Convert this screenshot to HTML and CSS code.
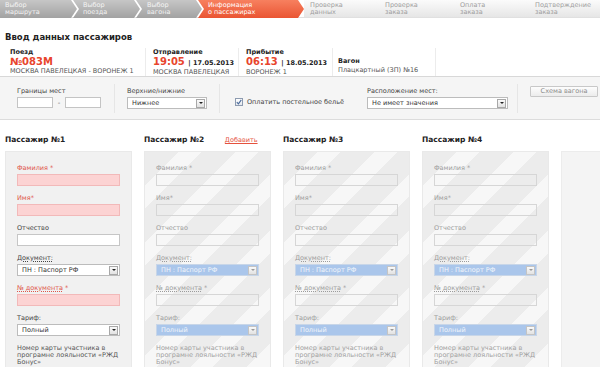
FILE: index.html
```html
<!DOCTYPE html>
<html lang="ru">
<head>
<meta charset="utf-8">
<title>Ввод данных пассажиров</title>
<link rel="stylesheet" href="styles.css">
</head>
<body>
<div class="steps">
  <div class="step done first">Выбор<br>маршрута</div>
  <div class="step done s2">Выбор<br>поезда</div>
  <div class="step done s3">Выбор<br>вагона</div>
  <div class="step active">Информация<br>о пассажирах</div>
  <div class="step todo">Проверка<br>данных</div>
  <div class="step todo">Проверка<br>заказа</div>
  <div class="step todo">Оплата<br>заказа</div>
  <div class="step todo">Подтверждение<br>заказа</div>
</div>

<h1 class="title">Ввод данных пассажиров</h1>

<div class="trip">
  <div class="tcol train">
    <div class="tlabel">Поезд</div>
    <div class="tbig">№083М</div>
    <div class="tsub">МОСКВА ПАВЕЛЕЦКАЯ - ВОРОНЕЖ 1</div>
  </div>
  <div class="tcol dep">
    <div class="tlabel">Отправление</div>
    <div class="tbig">19:05 <span class="tdate">| 17.05.2013</span></div>
    <div class="tsub">МОСКВА ПАВЕЛЕЦКАЯ</div>
  </div>
  <div class="tcol arr-col">
    <div class="tlabel">Прибытие</div>
    <div class="tbig">06:13 <span class="tdate">| 18.05.2013</span></div>
    <div class="tsub">ВОРОНЕЖ 1</div>
  </div>
  <div class="tcol car">
    <div class="tlabel">Вагон</div>
    <div class="tval">Плацкартный (ЗП) №16</div>
  </div>
</div>

<div class="filters">
  <div class="fsec f1">
    <div class="flabel">Границы мест</div>
    <div class="range"><span class="box small"></span><span class="dash">-</span><span class="box small"></span></div>
  </div>
  <div class="fsec f2">
    <div class="flabel">Верхние/нижние</div>
    <div class="sel fsel w80"><span>Нижнее</span><i class="arr"></i></div>
  </div>
  <div class="fsec f3">
    <div class="check"><span class="cb"><svg width="6" height="6" viewBox="0 0 6 6"><path d="M0.8 3.2 L2.4 4.8 L5.3 0.9" fill="none" stroke="#4a6a9a" stroke-width="1.1"/></svg></span>Оплатить постельное бельё</div>
  </div>
  <div class="fsec f4">
    <div class="flabel">Расположение мест:</div>
    <div class="sel fsel w141"><span>Не имеет значения</span><i class="arr"></i></div>
  </div>
  <div class="fsec f5">
    <div class="btn">Схема вагона</div>
  </div>
</div>

<div class="passengers">
  <div class="pcol">
    <div class="phead">Пассажир №1</div>
    <div class="panel">
      <div class="field req"><div class="lbl">Фамилия *</div><div class="inp"></div></div>
      <div class="field req"><div class="lbl">Имя*</div><div class="inp"></div></div>
      <div class="field"><div class="lbl">Отчество</div><div class="inp"></div></div>
      <div class="field"><div class="lbl"><u>Документ:</u></div><div class="sel"><span>ПН : Паспорт РФ</span><i class="arr"></i></div></div>
      <div class="field req"><div class="lbl"><u>№ документа</u> *</div><div class="inp"></div></div>
      <div class="field"><div class="lbl">Тариф:</div><div class="sel"><span>Полный</span><i class="arr"></i></div></div>
      <div class="note">Номер карты участника в програмне лояльности «РЖД Бонус»</div>
    </div>
  </div>

  <div class="pcol">
    <div class="phead">Пассажир №2 <a class="add">Добавить</a></div>
    <div class="panel off">
      <div class="field"><div class="lbl">Фамилия *</div><div class="inp"></div></div>
      <div class="field"><div class="lbl">Имя*</div><div class="inp"></div></div>
      <div class="field"><div class="lbl">Отчество</div><div class="inp"></div></div>
      <div class="field"><div class="lbl"><u>Документ:</u></div><div class="sel blue"><span>ПН : Паспорт РФ</span><i class="arr"></i></div></div>
      <div class="field"><div class="lbl"><u>№ документа</u> *</div><div class="inp"></div></div>
      <div class="field"><div class="lbl">Тариф:</div><div class="sel blue"><span>Полный</span><i class="arr"></i></div></div>
      <div class="note">Номер карты участника в програмне лояльности «РЖД Бонус»</div>
    </div>
  </div>

  <div class="pcol">
    <div class="phead">Пассажир №3</div>
    <div class="panel off">
      <div class="field"><div class="lbl">Фамилия *</div><div class="inp"></div></div>
      <div class="field"><div class="lbl">Имя*</div><div class="inp"></div></div>
      <div class="field"><div class="lbl">Отчество</div><div class="inp"></div></div>
      <div class="field"><div class="lbl"><u>Документ:</u></div><div class="sel blue"><span>ПН : Паспорт РФ</span><i class="arr"></i></div></div>
      <div class="field"><div class="lbl"><u>№ документа</u> *</div><div class="inp"></div></div>
      <div class="field"><div class="lbl">Тариф:</div><div class="sel blue"><span>Полный</span><i class="arr"></i></div></div>
      <div class="note">Номер карты участника в програмне лояльности «РЖД Бонус»</div>
    </div>
  </div>

  <div class="pcol">
    <div class="phead">Пассажир №4</div>
    <div class="panel off">
      <div class="field"><div class="lbl">Фамилия *</div><div class="inp"></div></div>
      <div class="field"><div class="lbl">Имя*</div><div class="inp"></div></div>
      <div class="field"><div class="lbl">Отчество</div><div class="inp"></div></div>
      <div class="field"><div class="lbl"><u>Документ:</u></div><div class="sel blue"><span>ПН : Паспорт РФ</span><i class="arr"></i></div></div>
      <div class="field"><div class="lbl"><u>№ документа</u> *</div><div class="inp"></div></div>
      <div class="field"><div class="lbl">Тариф:</div><div class="sel blue"><span>Полный</span><i class="arr"></i></div></div>
      <div class="note">Номер карты участника в програмне лояльности «РЖД Бонус»</div>
    </div>
  </div>

  <div class="pcol last">
    <div class="phead">&nbsp;</div>
    <div class="panel blank"></div>
  </div>
</div>
</body>
</html>
```

FILE: styles.css
```css
* { box-sizing: border-box; margin: 0; padding: 0; }
html, body { width: 600px; height: 367px; overflow: hidden; }
body {
  background: #fff;
  font-family: "DejaVu Sans", Verdana, sans-serif;
  font-size: 7px;
  color: #333;
}

/* progress steps */
.steps {
  display: flex;
  height: 18px;
  background: linear-gradient(to right, #fff 0 304px, transparent 304px), linear-gradient(#fbfbfb, #e6e6e6);
  border-bottom: 1px solid #e0e0e0;
}
.step {
  height: 18px;
  flex: none;
  font-size: 6.5px;
  line-height: 7px;
  padding-top: 2px;
}
.step.done, .step.active {
  clip-path: polygon(0 0, calc(100% - 6px) 0, 100% 50%, calc(100% - 6px) 100%, 0 100%, 6px 50%);
  margin-left: -4px;
  padding-left: 10px;
}
.step.done { background: linear-gradient(#c6c6c6, #a2a2a2); color: #f4f4f4; }
.step.first {
  margin-left: 0; padding-left: 5px; width: 77px;
  clip-path: polygon(0 0, calc(100% - 6px) 0, 100% 50%, calc(100% - 6px) 100%, 0 100%);
}
.step.s2 { width: 67px; }
.step.s3 { width: 66px; padding-left: 11px; }
.step.active { width: 106px; background: linear-gradient(#f7805f, #ea5533); color: #fff; }
.step.todo { width: 75px; padding-left: 6px; color: #9d9d9d; }

/* title */
.title {
  font-size: 8.5px;
  line-height: 12px;
  font-weight: bold;
  color: #222;
  margin: 13px 0 0 5px;
}

/* trip info */
.trip {
  display: flex;
  margin-top: 5px;
  height: 29px;
  border-bottom: 1px solid #d8d8d8;
}
.tcol {
  display: flex;
  flex-direction: column;
  border-right: 1px solid #ececec;
  padding-left: 7px;
}
.tcol.train { width: 146px; padding-left: 10px; }
.tcol.dep { width: 93px; }
.tcol.arr-col { width: 94px; }
.tcol.car { width: 103px; justify-content: flex-end; padding-left: 5px; padding-bottom: 1px; }
.tlabel { font-weight: bold; font-size: 6.5px; line-height: 9px; color: #222; }
.tbig { font-weight: bold; font-size: 10px; line-height: 10px; color: #e8452d; white-space: nowrap; }
.tdate { font-size: 6.5px; color: #222; }
.tsub { font-size: 6.5px; line-height: 9px; color: #555; white-space: nowrap; }
.tval { font-size: 6.5px; line-height: 9px; color: #555; white-space: nowrap; }

/* filters */
.filters {
  display: flex;
  height: 43px;
  background: #f5f5f5;
  border-bottom: 1px solid #dcdcdc;
  padding: 7px 0 6px;
}
.fsec {
  border-right: 1px solid #e6e6e6;
  display: flex;
  flex-direction: column;
  padding-top: 3px;
}
.f1 { width: 115px; padding-left: 17px; }
.f2 { width: 105px; padding-left: 12px; }
.f3 { width: 135px; padding-left: 15px; justify-content: flex-end; padding-bottom: 7px; border-right-color: transparent; }
.f4 { width: 163px; padding-left: 12px; }
.f5 { flex: 1; border-right: none; padding-left: 12px; padding-top: 2px; }
.flabel { font-size: 6.5px; line-height: 8px; color: #444; margin-bottom: 2px; }
.range { display: flex; align-items: center; }
.box.small { width: 36px; height: 11px; background: #fff; border: 1px solid #c4c4c4; }
.dash { width: 12px; text-align: center; color: #666; }
.check { display: flex; align-items: center; font-size: 6.5px; color: #444; gap: 4px; }
.cb {
  width: 8px; height: 8px; border: 1px solid #8d9bb0;
  background: linear-gradient(#fff, #e4e8ee);
  display: flex; align-items: center; justify-content: center;
}
.btn {
  width: 68px; height: 11px;
  border: 1px solid #c8c8c8;
  border-radius: 1px;
  background: linear-gradient(#fdfdfd, #ececec);
  color: #8a8a8a;
  font-size: 6.5px;
  line-height: 9px;
  text-align: center;
}

/* selects */
.sel {
  height: 12px;
  border: 1px solid #bcbcbc;
  background: #fff;
  display: flex;
  align-items: center;
  justify-content: space-between;
  padding: 0 1px 0 4px;
  font-size: 6.5px;
  color: #333;
}
.fsel.w80 { width: 80px; }
.fsel.w141 { width: 141px; }
.arr {
  width: 9px; height: 9px;
  border: 1px solid #a8a8a8;
  background: linear-gradient(#fafafa, #e2e2e2);
  display: flex; align-items: center; justify-content: center;
}
.arr::after {
  content: "";
  border-left: 2px solid transparent;
  border-right: 2px solid transparent;
  border-top: 2px solid #222;
}

/* passengers */
.passengers {
  display: flex;
  gap: 12px;
  padding-left: 5px;
  margin-top: 15px;
}
.pcol { width: 127px; flex: none; }
.pcol.last { width: 40px; }
.phead {
  font-weight: bold;
  font-size: 7.5px;
  line-height: 10px;
  color: #222;
  height: 16px;
  white-space: nowrap;
}
.add {
  font-weight: normal;
  font-size: 6.5px;
  color: #e5513d;
  text-decoration: underline;
  margin-left: 18px;
}
.panel {
  height: 230px;
  background: #f1f1f1;
  border: 1px solid #e9e9e9;
  padding: 12px 11px 0 11px;
}
.panel.off {
  background: repeating-linear-gradient(135deg, #ececec 0 24px, #f7f7f7 24px 40px);
}
.panel.blank { background: #f4f4f4; border-color: #ececec; }
.field { margin-bottom: 8px; }
.lbl { font-size: 6.5px; line-height: 9px; color: #444; margin-bottom: 1px; white-space: nowrap; }
.lbl u { text-decoration: underline dotted; }
.req .lbl { color: #e0554a; }
.inp { height: 12px; width: 103px; border: 1px solid #c6c6c6; background: #fff; }
.req .inp { background: #fcd3d3; border-color: #f2b9b9; }
.field .sel { width: 103px; }
.off .lbl { color: #9c9c9c; }
.off .inp { background: transparent; border-color: #d6d6d6; }
.sel.blue { background: #aac6eb; border-color: #c8d6e8; color: #f3f6fb; }
.sel.blue .arr { border-color: #c4c4c4; }
.sel.blue .arr::after { border-top-color: #999; }
.note { font-size: 6.5px; line-height: 7px; color: #555; padding-top: 1px; }
.off .note { color: #a0a0a0; }
```
